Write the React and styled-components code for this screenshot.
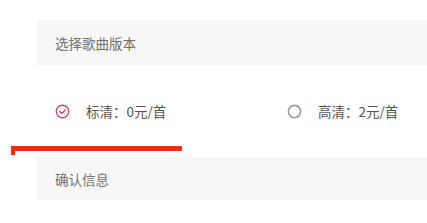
import React from 'react';
import styled, { createGlobalStyle } from 'styled-components';

const GlobalStyle = createGlobalStyle`
  body {
    margin: 0;
    background: #fff;
    font-family: "Noto Sans CJK SC", "Liberation Sans", sans-serif;
  }
`;

const Page = styled.div`
  width: 427px;
  height: 223px;
  padding-top: 20px;
  box-sizing: border-box;
  overflow: hidden;
  display: flex;
  flex-direction: column;
`;

const SectionBar = styled.div`
  margin-left: 37px;
  margin-top: ${p => p.top || 0}px;
  height: ${p => p.h || 45}px;
  background: #f7f7f7;
  display: flex;
  align-items: center;
  padding-left: 18px;
  font-size: 13.5px;
  color: #707070;
`;

const OptionRow = styled.div`
  display: flex;
  align-items: center;
  height: 30px;
  margin-top: 31px;
  padding-left: 55px;
`;

const Option = styled.label`
  display: flex;
  align-items: center;
  gap: 16px;
  flex: 0 0 232px;
  font-size: 13.5px;
  color: #555;
`;

const Underline = styled.div`
  position: relative;
  margin-top: 20px;
  margin-left: 11px;
  width: 171px;
  height: 5px;
  background: #f22a10;
  border-radius: 1px;
  &::before {
    content: '';
    position: absolute;
    left: 0;
    top: 0;
    width: 4px;
    height: 9px;
    background: #f22a10;
  }
`;

const Radio = ({ checked }) =>
  checked ? (
    <svg width="15" height="15" viewBox="0 0 15 15">
      <circle cx="7.5" cy="7.5" r="6.2" fill="none" stroke="#d0466c" strokeWidth="1.4" />
      <path d="M4.8 7.6 L6.8 9.5 L10.3 5.9" fill="none" stroke="#d0466c" strokeWidth="1.4" strokeLinecap="round" strokeLinejoin="round" />
    </svg>
  ) : (
    <svg width="15" height="15" viewBox="0 0 15 15">
      <circle cx="7.5" cy="7.5" r="6.1" fill="none" stroke="#9a9a9a" strokeWidth="1.6" />
    </svg>
  );

const App = () =>
  <Page>
    <GlobalStyle />
    <SectionBar>选择歌曲版本</SectionBar>
    <OptionRow>
      <Option><Radio checked />标清：0元/首</Option>
      <Option><Radio />高清：2元/首</Option>
    </OptionRow>
    <Underline />
    <SectionBar top={6} h={43}>确认信息</SectionBar>
  </Page>

export default App;
